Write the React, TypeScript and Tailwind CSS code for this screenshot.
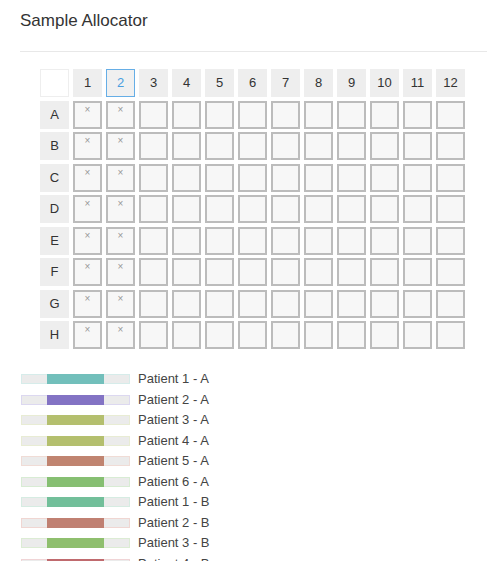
import React from 'react';

const cols = Array.from({ length: 12 }, (_, i) => i + 1);
const rows = ['A', 'B', 'C', 'D', 'E', 'F', 'G', 'H'];

const patients = [
  { name: 'Patient 1 - A', color: '#72bfbb', edge: '#d6ecea' },
  { name: 'Patient 2 - A', color: '#8373c4', edge: '#dcd8f0' },
  { name: 'Patient 3 - A', color: '#b4bf6e', edge: '#e8ecd4' },
  { name: 'Patient 4 - A', color: '#b4bf6e', edge: '#e8ecd4' },
  { name: 'Patient 5 - A', color: '#c08470', edge: '#f0dcd6' },
  { name: 'Patient 6 - A', color: '#86bf72', edge: '#d8ecd4' },
  { name: 'Patient 1 - B', color: '#72bf9a', edge: '#d6ece2' },
  { name: 'Patient 2 - B', color: '#c08072', edge: '#f0d6d2' },
  { name: 'Patient 3 - B', color: '#8fbf6e', edge: '#dcecd4' },
  { name: 'Patient 4 - B', color: '#c06a6e', edge: '#f0d4d6' },
];

const App: React.FC = () => {
  return (
    <div className="w-[497px] h-[561px] overflow-hidden bg-white font-['Liberation_Sans',Arial,sans-serif] text-[#333]">
      {/* Header */}
      <div className="px-[20px] pt-[10px]">
        <h1 className="text-[17px] leading-[22px] text-[#333]">Sample Allocator</h1>
        <div className="mt-[19px] h-px bg-[#e8e8e8] w-[467px]" />
      </div>

      {/* Plate grid */}
      <div className="ml-[40px] mt-[17px] grid grid-cols-[repeat(13,29px)] gap-x-[4px] gap-y-[3.5px] auto-rows-[28px]">
        <div className="border border-[#eee] bg-white" />
        {cols.map((c) => (
          <div
            key={c}
            className={`flex items-center justify-center text-[13px] ${
              c === 2 ? 'border border-[#66aee6] bg-[#f0f0f0] text-[#4a9ee0]' : 'bg-[#eeeeee] text-[#333]'
            }`}
          >
            {c}
          </div>
        ))}
        {rows.map((r) => (
          <React.Fragment key={r}>
            <div className="flex items-center justify-center bg-[#eeeeee] text-[13px] text-[#333]">{r}</div>
            {cols.map((c) => (
              <div key={c} className="border-2 border-[#bcbcbc] bg-[#f7f7f7] flex justify-center">
                {c <= 2 && <span className="text-[10px] leading-[14px] text-[#999]">×</span>}
              </div>
            ))}
          </React.Fragment>
        ))}
      </div>

      {/* Legend */}
      <div className="ml-[21px] mt-[25px] flex flex-col gap-[10.5px]">
        {patients.map((p) => (
          <div key={p.name} className="flex items-center h-[10px]">
            <div
              className="relative w-[109px] h-[10px] bg-[#ebebeb] border"
              style={{ borderColor: p.edge }}
            >
              <div className="absolute left-[25px] top-[-1px] w-[57px] h-[10px]" style={{ backgroundColor: p.color }} />
            </div>
            <span className="ml-[8px] text-[13px] leading-[16px] text-[#444] whitespace-nowrap">{p.name}</span>
          </div>
        ))}
      </div>
    </div>
  );
};

export default App;
